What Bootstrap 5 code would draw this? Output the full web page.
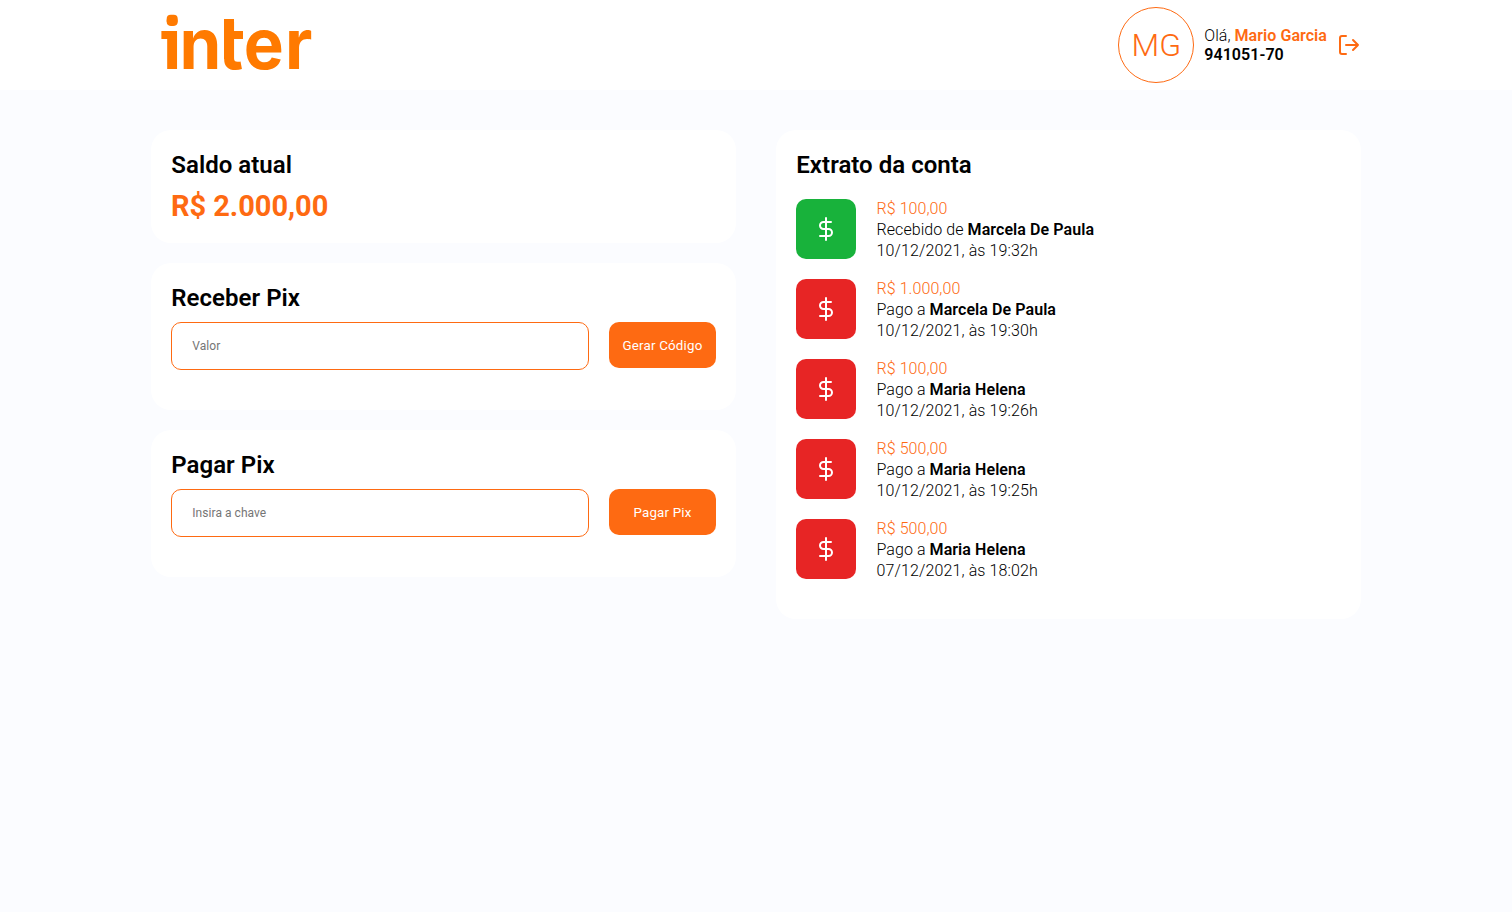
<!DOCTYPE html>
<html lang="pt-BR">
<head>
<meta charset="utf-8">
<meta name="viewport" content="width=device-width, initial-scale=1">
<title>Inter</title>
<link href="https://cdn.jsdelivr.net/npm/bootstrap@5.3.0/dist/css/bootstrap.min.css" rel="stylesheet">
<style>
  :root { --brand: #fe6a12; }
  body { background: #fbfcff; color: #000; font-family: Roboto, sans-serif; font-weight: 340; font-size: 16px; line-height: 21px; }
  b { font-weight: 560; }
  .text-brand { color: var(--brand); }
  .page-width { width: 1210px; }
  .topbar { height: 90px; }
  .avatar { width: 76px; height: 76px; border: 1px solid var(--brand); font-size: 32px; font-weight: 300; }
  .user-info { line-height: 19px; margin: 0 10px; letter-spacing: .06px; }
  .panel { background: #fff; border: 0; border-radius: 20px; padding: 20px; }
  .panel h2 { font-size: 24px; line-height: 30px; font-weight: 600; margin: 0 0 9px; text-indent: .3px; letter-spacing: .03px; }
  .panel .statement-title { margin-bottom: 19px; }
  .balance { font-size: 29px; line-height: 34px; font-weight: 660; letter-spacing: -.05px; }
  .columns { gap: 40px; padding-top: 40px; }
  .column { width: 585px; }
  .stack { gap: 20px; }
  .pix-form { gap: 20px; padding-bottom: 20px; }
  .pix-form .form-control { height: 48px; border: 1px solid var(--brand); border-radius: 10px; padding: 0 20.3px; font-size: 12px; letter-spacing: .05px; }
  .pix-form .form-control::placeholder { color: #757575; font-weight: 400; }
  .pix-form .btn { width: 107px; height: 46px; padding: 1px 0 0; border: 0; border-radius: 10px; background: var(--brand); color: #fff; font-size: 13.33px; font-weight: 450; letter-spacing: .2px; }
  .entry { height: 60px; margin-bottom: 20px; gap: 20.5px; letter-spacing: .07px; }
  .entry-date { letter-spacing: .12px; }
  .entry-icon { width: 60px; height: 60px; border-radius: 10px; background: #e72525; }
  .entry-icon.received { background: #18b23b; }
  .ico { width: 24px; height: 24px; fill: none; stroke: currentColor; stroke-width: 2; stroke-linecap: round; stroke-linejoin: round; }
  .logo text { font-family: Inter, sans-serif; font-weight: 650; font-size: 70px; }
</style>
</head>
<body>
<svg class="d-none">
  <symbol id="dollar" viewBox="0 0 24 24"><path d="M12 1v22M17 5H9.5a3.5 3.5 0 0 0 0 7h5a3.5 3.5 0 0 1 0 7H6"/></symbol>
</svg>

<header class="topbar bg-white">
  <div class="page-width mx-auto h-100 d-flex align-items-center justify-content-between">
    <svg class="logo" width="170" height="90" viewBox="0 0 170 90" fill="#ff7a00" role="img" aria-label="inter">
      <text transform="scale(.96 1)" y="69" x="12.4 29.8 70.3 96.7 139.6">inter</text>
      <rect x="66.9" y="29" width="6.1" height="12" fill="#fff"/>
      <rect x="73" y="19" width="10" height="40"/>
      <rect x="82" y="31" width="10" height="8"/>
      <rect x="10.4" y="31" width="12" height="8"/>
      <rect x="15.7" y="14.8" width="11" height="11" rx="4"/>
    </svg>
    <div class="d-flex align-items-center">
      <div class="avatar rounded-circle d-flex align-items-center justify-content-center text-brand">MG</div>
      <div class="user-info">Olá, <b class="text-brand">Mario Garcia</b><br><b>941051-70</b></div>
      <svg class="ico text-brand" viewBox="0 0 24 24"><path d="M9 21H5a2 2 0 0 1-2-2V5a2 2 0 0 1 2-2h4M16 17l5-5-5-5M21 12H9"/></svg>
    </div>
  </div>
</header>

<main class="page-width mx-auto d-flex align-items-start columns">
  <div class="column stack d-flex flex-column">
    <section class="card panel">
      <h2>Saldo atual</h2>
      <div class="balance text-brand">R$ 2.000,00</div>
    </section>
    <section class="card panel">
      <h2>Receber Pix</h2>
      <form class="pix-form d-flex align-items-start">
        <input class="form-control" placeholder="Valor">
        <button type="button" class="btn flex-shrink-0">Gerar Código</button>
      </form>
    </section>
    <section class="card panel">
      <h2>Pagar Pix</h2>
      <form class="pix-form d-flex align-items-start">
        <input class="form-control" placeholder="Insira a chave">
        <button type="button" class="btn flex-shrink-0">Pagar Pix</button>
      </form>
    </section>
  </div>

  <section class="column card panel">
    <h2 class="statement-title">Extrato da conta</h2>
    <div class="entry d-flex align-items-center">
      <div class="entry-icon received d-flex align-items-center justify-content-center text-white"><svg class="ico"><use href="#dollar"/></svg></div>
      <div><span class="text-brand">R$ 100,00</span><br>Recebido de <b>Marcela De Paula</b><br><span class="entry-date">10/12/2021, às 19:32h</span></div>
    </div>
    <div class="entry d-flex align-items-center">
      <div class="entry-icon d-flex align-items-center justify-content-center text-white"><svg class="ico"><use href="#dollar"/></svg></div>
      <div><span class="text-brand">R$ 1.000,00</span><br>Pago a <b>Marcela De Paula</b><br><span class="entry-date">10/12/2021, às 19:30h</span></div>
    </div>
    <div class="entry d-flex align-items-center">
      <div class="entry-icon d-flex align-items-center justify-content-center text-white"><svg class="ico"><use href="#dollar"/></svg></div>
      <div><span class="text-brand">R$ 100,00</span><br>Pago a <b>Maria Helena</b><br><span class="entry-date">10/12/2021, às 19:26h</span></div>
    </div>
    <div class="entry d-flex align-items-center">
      <div class="entry-icon d-flex align-items-center justify-content-center text-white"><svg class="ico"><use href="#dollar"/></svg></div>
      <div><span class="text-brand">R$ 500,00</span><br>Pago a <b>Maria Helena</b><br><span class="entry-date">10/12/2021, às 19:25h</span></div>
    </div>
    <div class="entry d-flex align-items-center">
      <div class="entry-icon d-flex align-items-center justify-content-center text-white"><svg class="ico"><use href="#dollar"/></svg></div>
      <div><span class="text-brand">R$ 500,00</span><br>Pago a <b>Maria Helena</b><br><span class="entry-date">07/12/2021, às 18:02h</span></div>
    </div>
  </section>
</main>
<script src="https://cdn.jsdelivr.net/npm/bootstrap@5.3.0/dist/js/bootstrap.bundle.min.js"></script>
</body>
</html>
